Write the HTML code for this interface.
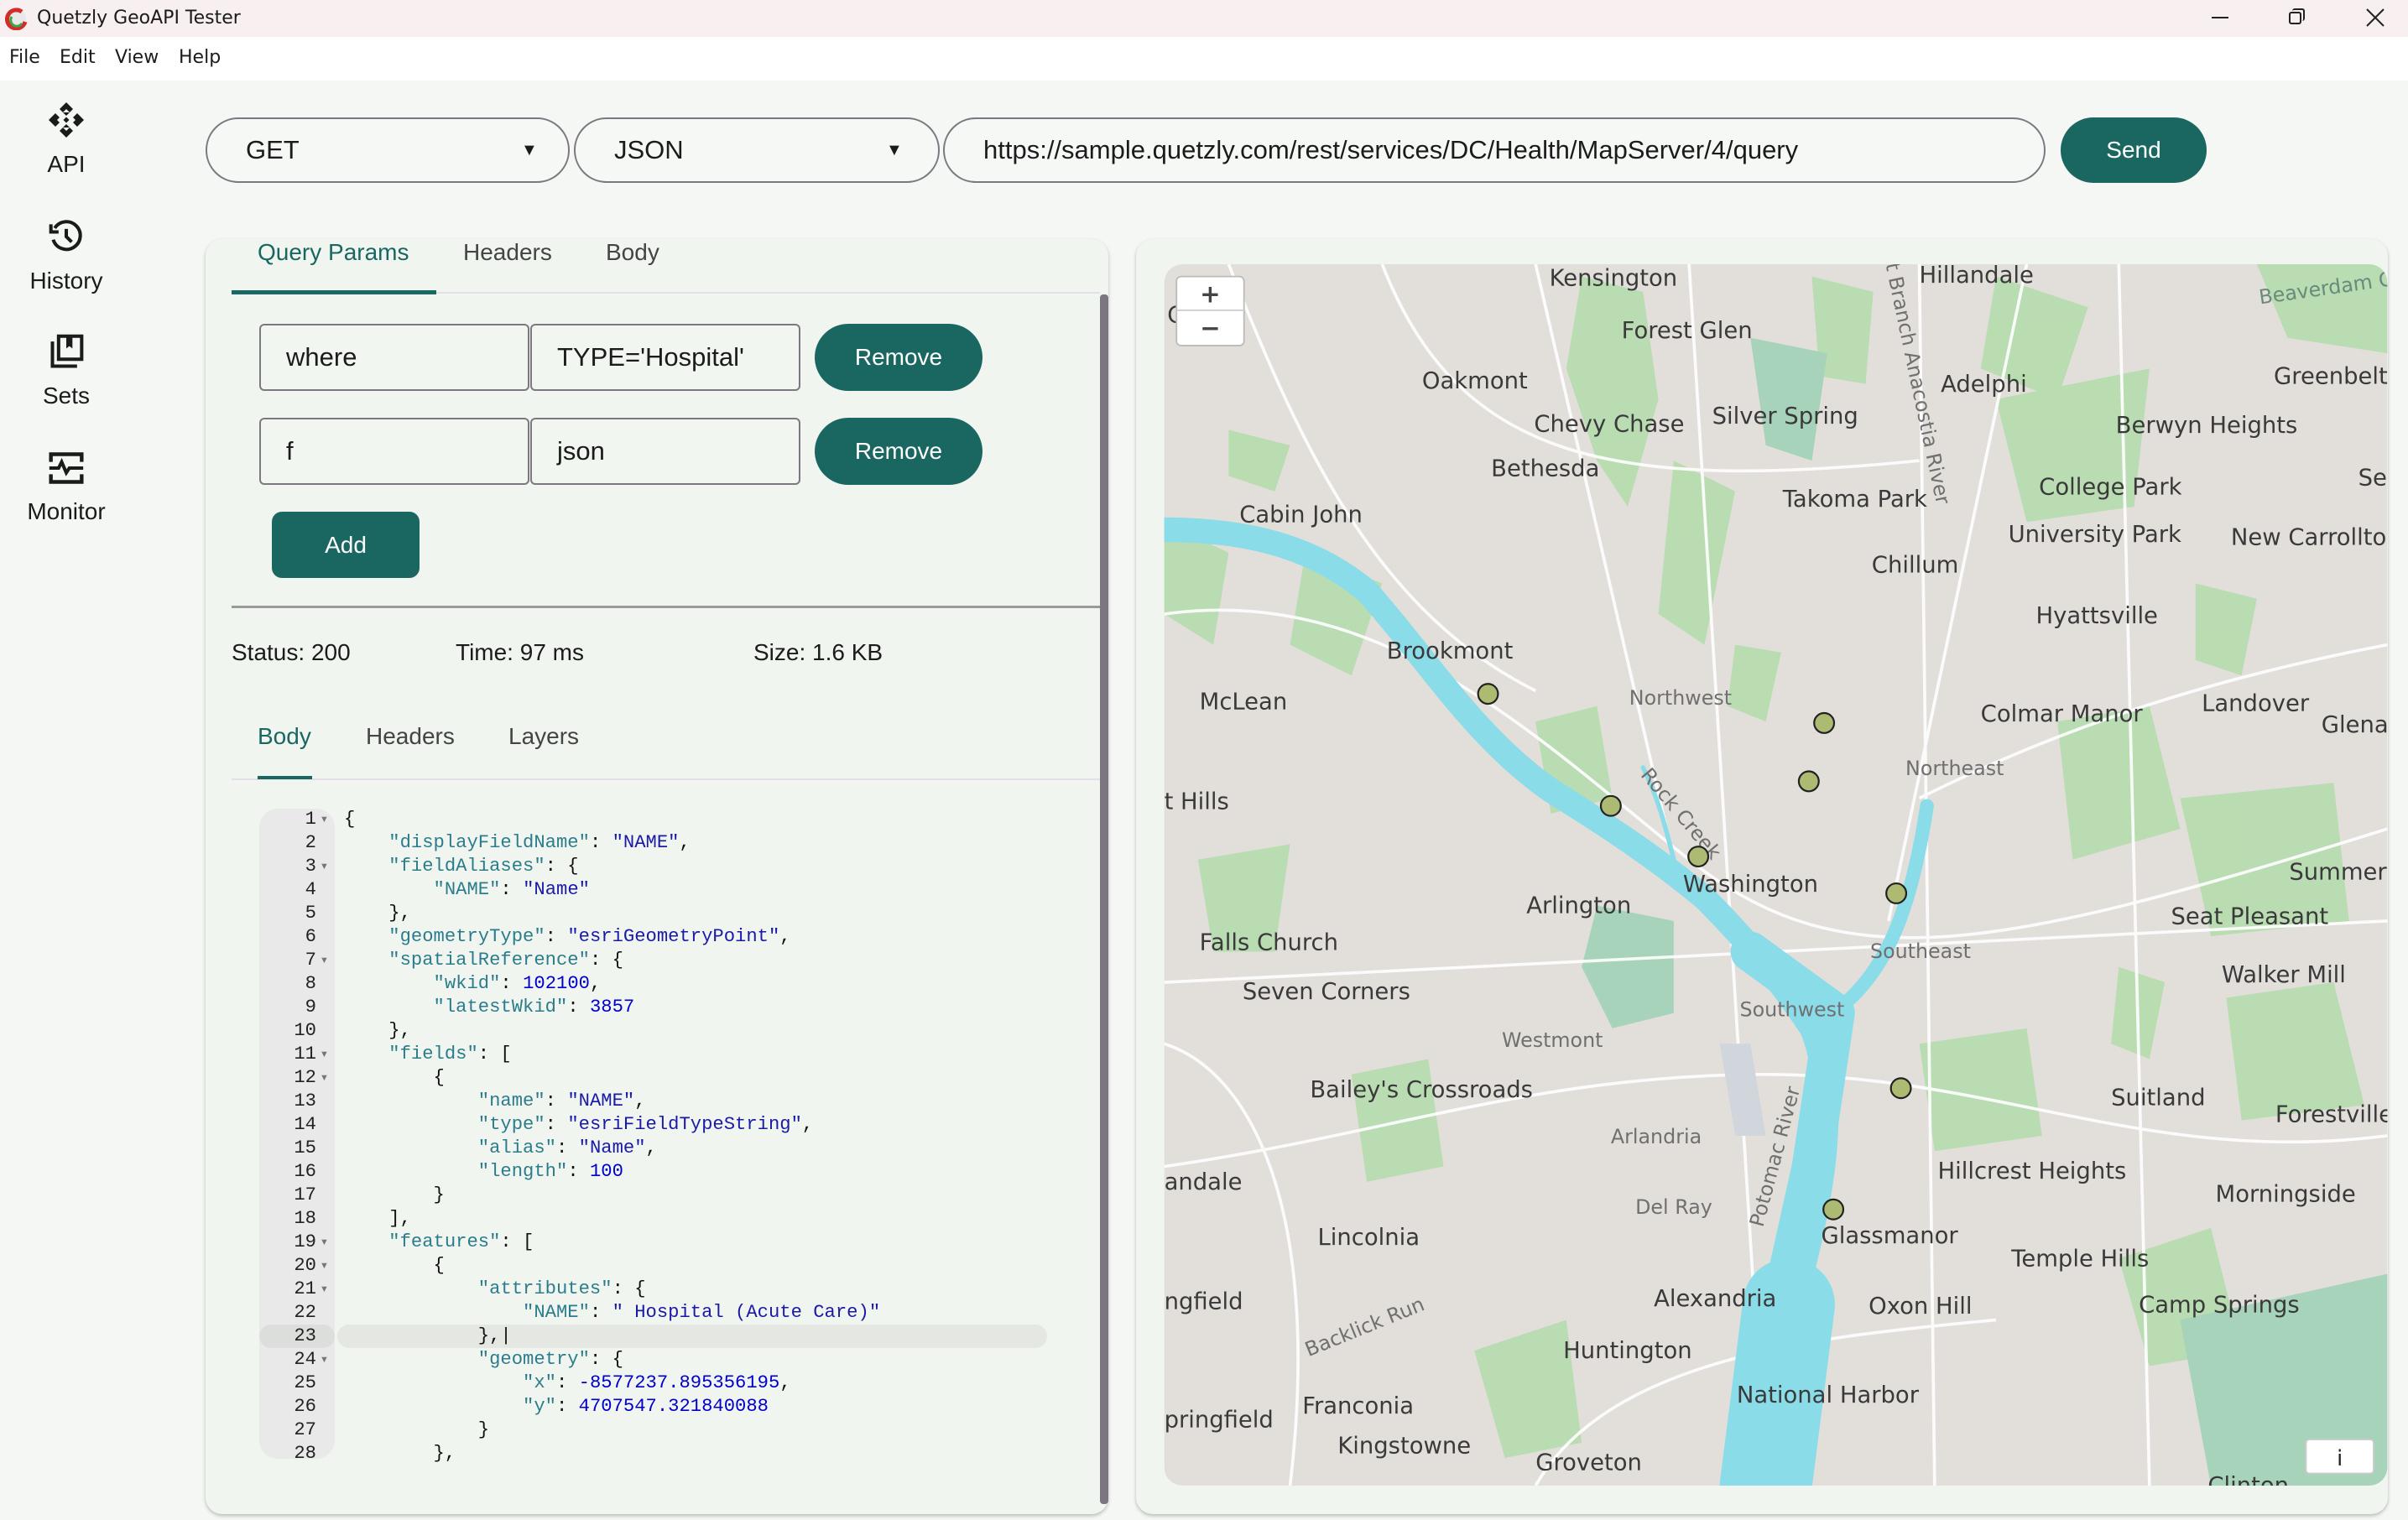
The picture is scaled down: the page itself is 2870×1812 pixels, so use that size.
<!DOCTYPE html>
<html><head><meta charset="utf-8">
<style>
*{box-sizing:border-box;margin:0;padding:0}
body{width:2870px;height:1812px;overflow:hidden;background:#f5f7f5;font-family:"Liberation Sans",Arial,sans-serif;color:#1b1b1b;position:relative}
.abs{position:absolute}
.title{left:0;top:0;width:2870px;height:44px;background:#f7eff0}
.menu{left:0;top:44px;width:2870px;height:52px;background:#fff;font-family:"DejaVu Sans","Liberation Sans",sans-serif;font-size:22px}
.menu span{position:absolute;top:12px}
.side{font-size:28px;text-align:center;width:158px;left:0}
.pill{border:2px solid #7c7880;border-radius:42px;height:78px;top:140px;font-size:31px;line-height:74px;padding-left:46px;background:#f6f8f6}
.btn{background:#1a6762;color:#fff;text-align:center;font-size:28px}
.panel{background:#f1f5f0;border-radius:20px;box-shadow:0 2px 4px rgba(0,0,0,.25)}
.inp{border:2px solid #7c7880;border-radius:6px;height:80px;font-size:31px;line-height:76px;padding-left:30px;background:#f2f6f1}
.tab{font-size:28px;color:#444}
.code{font-family:"Liberation Mono","DejaVu Sans Mono",monospace;font-size:22.2px;line-height:28px;white-space:pre;left:410px;top:963px;color:#111}
.gut{font-family:"Liberation Mono",monospace;font-size:22.2px;line-height:28px;white-space:pre;text-align:right;left:309px;top:963px;width:68px;color:#222}
.k{color:#2b7c8c}.s{color:#1a1aa6}.n{color:#0000cd}
.fold{left:381px;font-size:11px;color:#777;line-height:28px}
</style></head><body>
<div class="abs title">
 <svg class="abs" style="left:6px;top:8px" width="28" height="28" viewBox="0 0 28 28"><circle cx="14" cy="14" r="11" fill="#e8e8e8"/><path d="M20 6 A11 11 0 1 0 24 18" stroke="#d42b2b" stroke-width="5" fill="none"/><path d="M8 12 A7 7 0 0 0 20 20" stroke="#3aa645" stroke-width="3" fill="none"/></svg>
 <span class="abs" style="left:44px;top:9px;font-family:'DejaVu Sans',sans-serif;font-size:22px">Quetzly GeoAPI Tester</span>
 <div class="abs" style="left:2636px;top:20px;width:20px;height:2px;background:#222"></div>
 <div class="abs" style="left:2728px;top:14px;width:15px;height:15px;border:2px solid #222;border-radius:3px"></div>
 <div class="abs" style="left:2732px;top:10px;width:15px;height:15px;border-top:2px solid #222;border-right:2px solid #222;border-radius:3px"></div>
 <svg class="abs" style="left:2820px;top:10px" width="22" height="22"><path d="M1 1L21 21M21 1L1 21" stroke="#222" stroke-width="2"/></svg>
</div>
<div class="abs menu"><span style="left:11px">File</span><span style="left:71px">Edit</span><span style="left:137px">View</span><span style="left:213px">Help</span></div>

<svg class="abs" style="left:57px;top:121px" width="44" height="44" viewBox="0 0 44 44"><g fill="#1b1b1b"><path d="M22 1l8 8-8 8-8-8z"/><path d="M22 27l8 8-8 8-8-8z"/><path d="M1 22l8-8 5 5-3 3 3 3-5 5z"/><path d="M43 22l-8-8-5 5 3 3-3 3 5 5z"/><rect x="19.5" y="19.5" width="5" height="5" transform="rotate(45 22 22)"/></g><path d="M22 9l-4 4h8z M22 35l-4-4h8z" fill="#f5f7f5"/></svg>
<div class="abs side" style="top:180px">API</div>
<svg class="abs" style="left:57px;top:260px" width="44" height="44" viewBox="0 0 24 24"><path d="M4.5 6.5A9 9 0 1 1 3.5 14" fill="none" stroke="#1b1b1b" stroke-width="2.2"/><path d="M2 4v5h5" fill="none" stroke="#1b1b1b" stroke-width="2.2"/><path d="M12 7v5l3.5 3.5" fill="none" stroke="#1b1b1b" stroke-width="2.2"/></svg>
<div class="abs side" style="top:319px">History</div>
<svg class="abs" style="left:57px;top:398px" width="44" height="44" viewBox="0 0 24 24"><path d="M3 5v16h16" fill="none" stroke="#1b1b1b" stroke-width="2.2"/><rect x="7" y="1.5" width="15" height="15" fill="none" stroke="#1b1b1b" stroke-width="2.2"/><path d="M12 1.5v8l2-1.5 2 1.5v-8z" fill="#1b1b1b"/></svg>
<div class="abs side" style="top:456px">Sets</div>
<svg class="abs" style="left:57px;top:536px" width="44" height="44" viewBox="0 0 24 24"><path d="M2 8V3h20v5M2 16v5h20v-5" fill="none" stroke="#1b1b1b" stroke-width="2.4"/><path d="M1 12h6l2-4 3 7 2-3h9" fill="none" stroke="#1b1b1b" stroke-width="2.2"/></svg>
<div class="abs side" style="top:594px">Monitor</div>

<div class="abs pill" style="left:245px;width:434px">GET<span class="abs" style="left:374px;top:0;font-size:20px">▼</span></div>
<div class="abs pill" style="left:684px;width:436px">JSON<span class="abs" style="left:370px;top:0;font-size:20px">▼</span></div>
<div class="abs pill" style="left:1124px;width:1314px">https://sample.quetzly.com/rest/services/DC/Health/MapServer/4/query</div>
<div class="abs btn" style="left:2456px;top:140px;width:174px;height:78px;border-radius:40px;line-height:78px">Send</div>

<div class="abs panel" style="left:245px;top:285px;width:1076px;height:1520px"></div>
<div class="abs tab" style="left:307px;top:285px;color:#1a6762">Query Params</div>
<div class="abs tab" style="left:552px;top:285px">Headers</div>
<div class="abs tab" style="left:722px;top:285px">Body</div>
<div class="abs" style="left:276px;top:348px;width:1035px;height:2px;background:#e3dfe8"></div>
<div class="abs" style="left:276px;top:346px;width:244px;height:5px;background:#1a6762"></div>

<div class="abs inp" style="left:309px;top:386px;width:322px">where</div>
<div class="abs inp" style="left:632px;top:386px;width:322px">TYPE='Hospital'</div>
<div class="abs btn" style="left:971px;top:386px;width:200px;height:80px;border-radius:40px;line-height:80px">Remove</div>
<div class="abs inp" style="left:309px;top:498px;width:322px">f</div>
<div class="abs inp" style="left:632px;top:498px;width:322px">json</div>
<div class="abs btn" style="left:971px;top:498px;width:200px;height:80px;border-radius:40px;line-height:80px">Remove</div>
<div class="abs btn" style="left:324px;top:610px;width:176px;height:79px;border-radius:12px;line-height:79px">Add</div>
<div class="abs" style="left:276px;top:722px;width:1035px;height:3px;background:#9a9a9a"></div>

<div class="abs" style="left:276px;top:762px;font-size:28px">Status: 200</div>
<div class="abs" style="left:543px;top:762px;font-size:28px">Time: 97 ms</div>
<div class="abs" style="left:898px;top:762px;font-size:28px">Size: 1.6 KB</div>

<div class="abs tab" style="left:307px;top:862px;color:#1a6762">Body</div>
<div class="abs tab" style="left:436px;top:862px">Headers</div>
<div class="abs tab" style="left:606px;top:862px">Layers</div>
<div class="abs" style="left:276px;top:928px;width:1035px;height:2px;background:#e3dfe8"></div>
<div class="abs" style="left:307px;top:925px;width:65px;height:4px;background:#1a6762"></div>

<div class="abs" style="left:309px;top:964px;width:90px;height:775px;background:#e8e9e8;border-radius:22px"></div>
<div class="abs" style="left:309px;top:1579px;width:90px;height:28px;background:#dcdedc;border-radius:14px"></div>
<div class="abs" style="left:402px;top:1579px;width:846px;height:28px;background:#e4e7e2;border-radius:14px"></div>
<div class="abs" style="left:1311px;top:351px;width:10px;height:1442px;background:#7c7680;border-radius:4px"></div>
<div class="abs gut">1
2
3
4
5
6
7
8
9
10
11
12
13
14
15
16
17
18
19
20
21
22
23
24
25
26
27
28</div>
<div class="abs fold" style="top:963px">▼</div>
<div class="abs fold" style="top:1019px">▼</div>
<div class="abs fold" style="top:1131px">▼</div>
<div class="abs fold" style="top:1243px">▼</div>
<div class="abs fold" style="top:1271px">▼</div>
<div class="abs fold" style="top:1467px">▼</div>
<div class="abs fold" style="top:1495px">▼</div>
<div class="abs fold" style="top:1523px">▼</div>
<div class="abs fold" style="top:1607px">▼</div>
<div class="abs code">{
    <span class="k">"displayFieldName"</span>: <span class="s">"NAME"</span>,
    <span class="k">"fieldAliases"</span>: {
        <span class="k">"NAME"</span>: <span class="s">"Name"</span>
    },
    <span class="k">"geometryType"</span>: <span class="s">"esriGeometryPoint"</span>,
    <span class="k">"spatialReference"</span>: {
        <span class="k">"wkid"</span>: <span class="n">102100</span>,
        <span class="k">"latestWkid"</span>: <span class="n">3857</span>
    },
    <span class="k">"fields"</span>: [
        {
            <span class="k">"name"</span>: <span class="s">"NAME"</span>,
            <span class="k">"type"</span>: <span class="s">"esriFieldTypeString"</span>,
            <span class="k">"alias"</span>: <span class="s">"Name"</span>,
            <span class="k">"length"</span>: <span class="n">100</span>
        }
    ],
    <span class="k">"features"</span>: [
        {
            <span class="k">"attributes"</span>: {
                <span class="k">"NAME"</span>: <span class="s">" Hospital (Acute Care)"</span>
            },|
            <span class="k">"geometry"</span>: {
                <span class="k">"x"</span>: <span class="n">-8577237.895356195</span>,
                <span class="k">"y"</span>: <span class="n">4707547.321840088</span>
            }
        },</div>

<div class="abs panel" style="left:1354px;top:285px;width:1492px;height:1520px;background:#f1f5f0"></div>
<svg class="abs" style="left:1387px;top:315px;border-radius:22px" width="1459" height="1456" viewBox="758 172 797 796" font-family="DejaVu Sans,sans-serif" font-size="15" fill="#3a3a3a">
<defs><clipPath id="c"><rect x="758" y="172" width="797" height="796" rx="12"/></clipPath></defs>
<g clip-path="url(#c)">
<rect x="758" y="172" width="797" height="796" fill="#e2dfdb"/>
<g fill="#b2dcaa" opacity=".85">
<path d="M1030 180 L1070 190 1080 260 1060 330 1040 300 1020 240z"/>
<path d="M1090 300 L1130 320 1110 420 1080 400z"/>
<path d="M1300 180 L1360 200 1340 260 1290 240z"/>
<path d="M1470 172 L1555 172 1555 230 1490 220z"/>
<path d="M1300 260 L1400 240 1390 330 1320 340z"/>
<path d="M758 340 L800 360 790 420 758 400z"/>
<path d="M850 360 L900 380 880 440 840 420z"/>
<path d="M1340 470 L1400 460 1420 540 1350 560z"/>
<path d="M1420 520 L1520 510 1530 600 1440 610z"/>
<path d="M1450 650 L1520 640 1540 720 1460 730z"/>
<path d="M1000 470 L1040 460 1050 520 1010 530z"/>
<path d="M880 700 L930 690 940 760 890 770z"/>
<path d="M1250 680 L1320 670 1330 740 1260 750z"/>
<path d="M960 880 L1020 860 1030 940 980 950z"/>
<path d="M1380 820 L1440 800 1460 880 1400 890z"/>
<path d="M780 560 L840 550 830 620 790 620z"/>
<path d="M1180 180 L1220 190 1215 250 1185 245z"/>
<path d="M800 280 L840 290 830 320 800 310z"/>
<path d="M1430 380 L1470 390 1460 440 1430 430z"/>
<path d="M1380 630 L1410 640 1400 690 1375 680z"/>
<path d="M1130 420 L1160 425 1150 470 1125 460z"/>
</g>
<g fill="#a6d3b9">
<path d="M1040 590 L1090 600 1090 660 1050 670 1030 630z"/>
<path d="M1140 220 L1190 230 1180 300 1150 290z"/>
<path d="M1420 860 L1555 830 1555 968 1440 968z"/>
</g>
<g fill="none" stroke="#fff" stroke-width="2" opacity=".9">
<path d="M758 400 C900 380 1000 480 1100 560 S1300 620 1555 540"/>
<path d="M800 172 C850 300 900 400 1000 450"/>
<path d="M1100 172 L1150 968"/><path d="M758 640 L1555 600"/>
<path d="M758 760 C900 740 1000 700 1150 700 S1400 760 1555 740"/>
<path d="M900 172 C950 300 1050 320 1250 300 1400 290 1555 320"/>
<path d="M1000 968 C1050 880 1200 870 1300 860 1450 820 1555 840"/>
<path d="M1250 172 L1260 968"/><path d="M1380 172 L1400 968"/>
<path d="M840 968 C860 800 820 700 758 680"/>
<path d="M1555 420 C1450 440 1350 470 1250 520"/>
<path d="M1000 172 L1090 560"/><path d="M1320 172 L1230 600"/>
</g>
<g fill="none" stroke="#8adce8" stroke-linecap="round" stroke-linejoin="round">
<path d="M758 345 C820 345 860 360 890 385 C930 430 960 480 1010 515 C1050 540 1080 560 1110 585 C1140 615 1160 640 1180 670 C1200 720 1185 790 1165 860" stroke-width="16"/>
<path d="M1165 850 L1150 968" stroke-width="60"/>
<path d="M1140 620 L1195 660 L1180 760 L1160 850" stroke-width="26"/>
<path d="M1200 655 C1230 630 1245 590 1255 525" stroke-width="9"/>
<path d="M1090 560 C1085 540 1080 520 1070 500" stroke-width="3"/>
</g>
<path d="M1120 680 L1140 680 1150 740 1130 740z" fill="#d0d6dc"/>
<g font-size="15">
<text x="1009" y="186">Kensington</text><text x="1250" y="184">Hillandale</text>
<text x="1056" y="220">Forest Glen</text><text x="926" y="253">Oakmont</text>
<text x="1264" y="255">Adelphi</text><text x="1481" y="250">Greenbelt</text>
<text x="999" y="281">Chevy Chase</text><text x="1115" y="276">Silver Spring</text>
<text x="1378" y="282">Berwyn Heights</text><text x="971" y="310">Bethesda</text>
<text x="1536" y="316">Se</text><text x="1328" y="322">College Park</text>
<text x="1161" y="330">Takoma Park</text><text x="807" y="340">Cabin John</text>
<text x="1308" y="353">University Park</text><text x="1453" y="355">New Carrollton</text>
<text x="1219" y="373">Chillum</text><text x="1326" y="406">Hyattsville</text>
<text x="903" y="429">Brookmont</text><text x="781" y="462">McLean</text>
<text x="1290" y="470">Colmar Manor</text><text x="1434" y="463">Landover</text>
<text x="1512" y="477">Glenar</text><text x="758" y="527">t Hills</text>
<text x="1096" y="581">Washington</text><text x="994" y="595">Arlington</text>
<text x="1491" y="573">Summerf</text><text x="1414" y="602">Seat Pleasant</text>
<text x="781" y="619">Falls Church</text><text x="1447" y="640">Walker Mill</text>
<text x="809" y="651">Seven Corners</text><text x="853" y="715">Bailey's Crossroads</text>
<text x="1375" y="720">Suitland</text><text x="1482" y="731">Forestville</text>
<text x="758" y="775">andale</text><text x="1262" y="768">Hillcrest Heights</text>
<text x="1443" y="783">Morningside</text><text x="1186" y="810">Glassmanor</text>
<text x="858" y="811">Lincolnia</text><text x="1310" y="825">Temple Hills</text>
<text x="758" y="853">ngfield</text><text x="1077" y="851">Alexandria</text>
<text x="1217" y="856">Oxon Hill</text><text x="1393" y="855">Camp Springs</text>
<text x="1018" y="885">Huntington</text><text x="1131" y="914">National Harbor</text>
<text x="848" y="921">Franconia</text><text x="758" y="930">pringfield</text>
<text x="871" y="947">Kingstowne</text><text x="1000" y="958">Groveton</text>
<text x="1438" y="973">Clinton</text><text x="760" y="210">C</text>
</g>
<g font-size="13" fill="#707070">
<text x="1061" y="459">Northwest</text><text x="1241" y="505">Northeast</text>
<text x="1218" y="624">Southeast</text><text x="1133" y="662">Southwest</text>
<text x="978" y="682">Westmont</text><text x="1049" y="745">Arlandria</text>
<text x="1065" y="791">Del Ray</text>
<text x="1068" y="505" transform="rotate(50 1068 505)">Rock Creek</text>
<text x="1148" y="800" transform="rotate(-75 1148 800)">Potomac River</text>
<text x="1228" y="172" transform="rotate(78 1228 172)">t Branch Anacostia River</text>
<text x="852" y="884" transform="rotate(-22 852 884)">Backlick Run</text>
<text x="1472" y="198" transform="rotate(-8 1472 198)" fill="#6a8a7a">Beaverdam Cr</text>
</g>
<g fill="#adbb72" stroke="#222" stroke-width="1.2">
<circle cx="969" cy="452" r="6.5"/><circle cx="1188" cy="471" r="6.5"/><circle cx="1178" cy="509" r="6.5"/><circle cx="1049" cy="525" r="6.5"/><circle cx="1106" cy="558" r="6.5"/><circle cx="1235" cy="582" r="6.5"/><circle cx="1238" cy="709" r="6.5"/><circle cx="1194" cy="788" r="6.5"/>
</g>
<rect x="766" y="180" width="44" height="45" rx="3" fill="#fff" stroke="#bbb"/>
<line x1="766" y1="202" x2="810" y2="202" stroke="#ccc"/>
<text x="788" y="197" text-anchor="middle" font-size="16" font-weight="bold" fill="#444">+</text>
<text x="788" y="219" text-anchor="middle" font-size="16" font-weight="bold" fill="#444">−</text>
<rect x="1502" y="938" width="44" height="22" rx="2" fill="#fff" stroke="#ccc"/>
<text x="1524" y="955" text-anchor="middle" font-size="14" fill="#222">i</text>
</g></svg>
</body></html>
